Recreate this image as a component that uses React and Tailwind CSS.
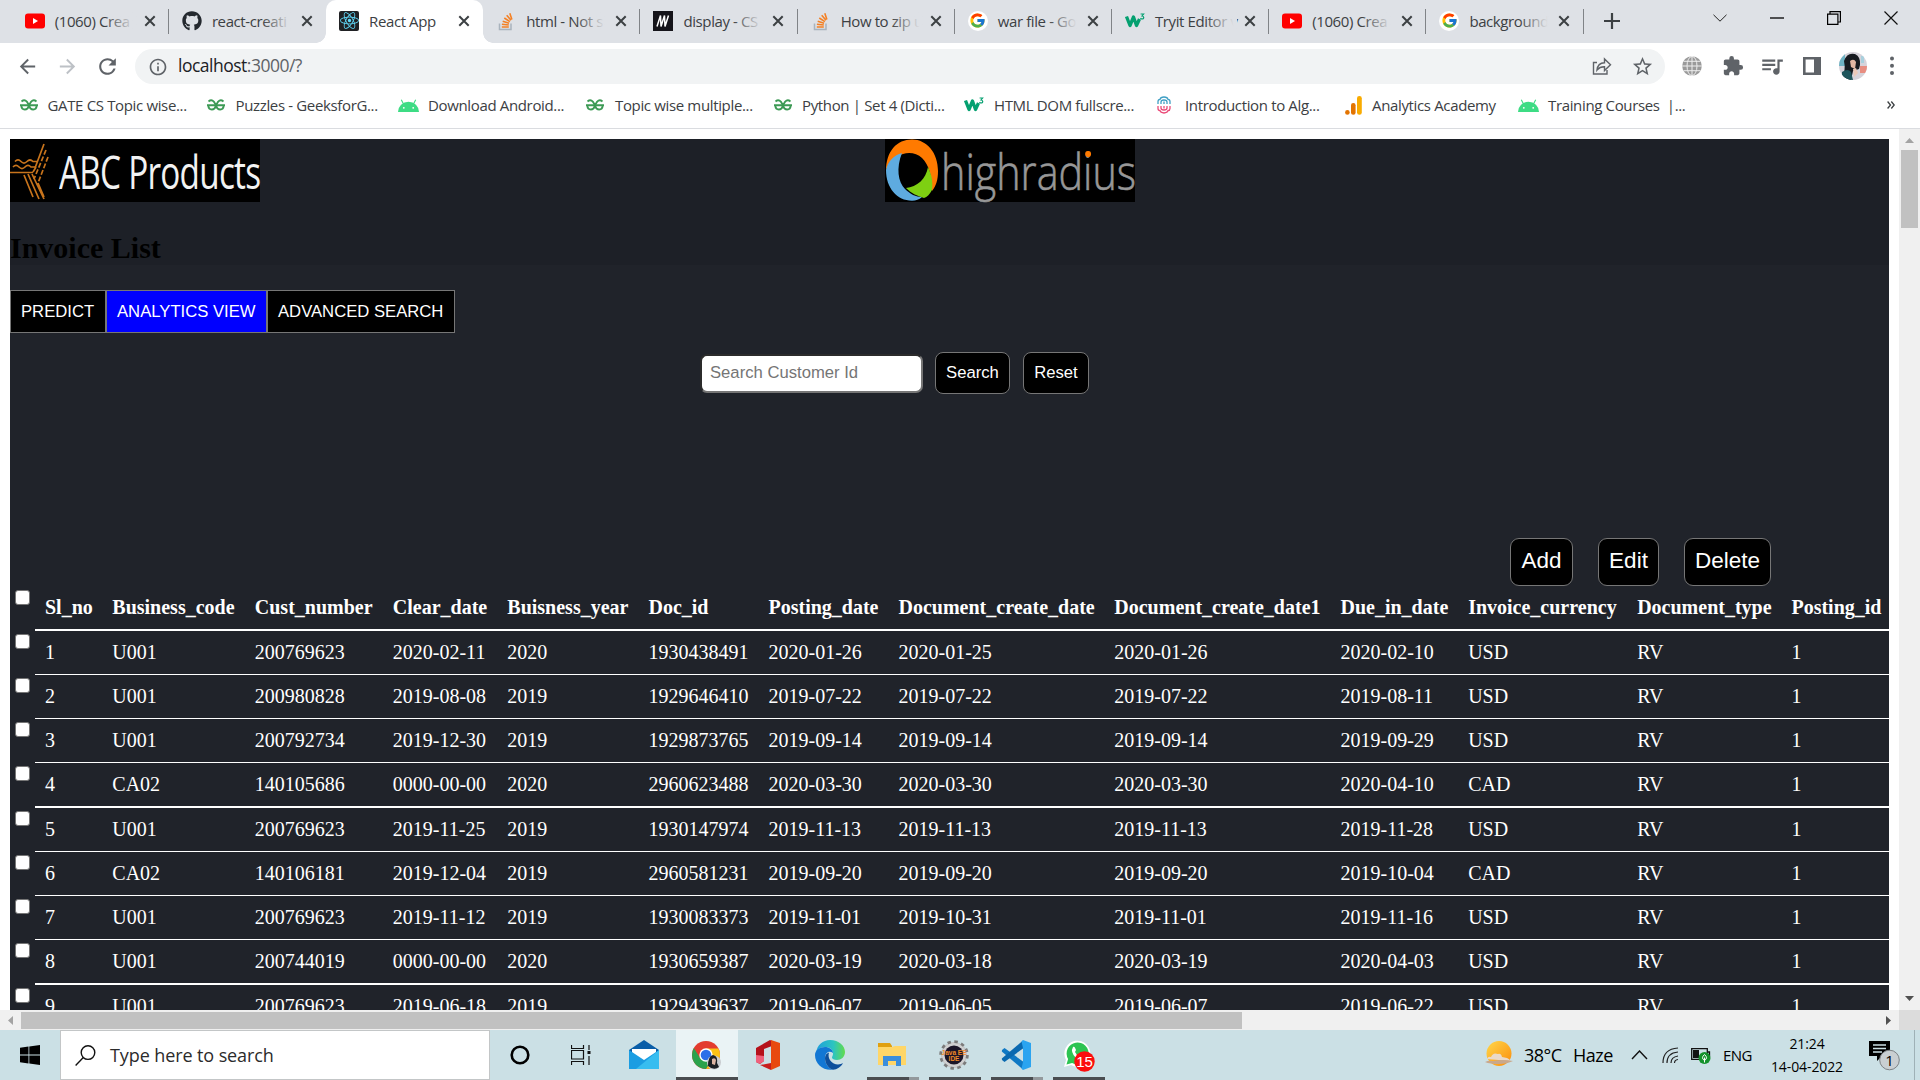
import React from "react";
import { FaGithub, FaReact } from "react-icons/fa";
import { FcGoogle } from "react-icons/fc";
import { MdExtension, MdQueueMusic, MdStarOutline, MdRefresh, MdArrowBack, MdArrowForward, MdInfoOutline } from "react-icons/md";

const YouTube = () => (
  <svg width="20" height="16" viewBox="0 0 20 16"><rect width="20" height="15" y=".5" rx="3" fill="#f00" /><path d="M8 5v6l5-3z" fill="#fff" /></svg>
);
const Github = () => <FaGithub size={20} color="#24292f" />;
const ReactIcon = () => (
  <span className="flex h-5 w-5 items-center justify-center rounded-[2px] bg-[#202124]"><FaReact size={19} color="#61dafb" /></span>
);
const Stack = () => (
  <svg width="20" height="20" viewBox="0 0 20 20" fill="none">
    <path d="M3.500 12.500v6h11.500v-6" stroke="#a9b3bd" strokeWidth="1.500" />
    <path d="M5.800 16h7M5.900 13.200l6.900.8M6.700 10.200l6.400 2M8.300 7l5.600 3.700M10.700 4.200l4.300 5M13.800 2.200l2.100 6.300" stroke="#f48024" strokeWidth="1.600" />
  </svg>
);
const Mdn = () => (
  <svg width="20" height="20" viewBox="0 0 20 20"><rect width="20" height="20" fill="#15141a" /><path d="M4 15.500L7.500 4.500l.5 11L11.500 4.500l.5 11L15.500 4.500" fill="none" stroke="#fff" strokeWidth="1.500" /></svg>
);
const Google = () => <span className="flex h-5 w-5 items-center justify-center rounded-full bg-white"><FcGoogle size={17} /></span>;
const W3 = () => (
  <svg width="20" height="18" viewBox="0 0 20 18" fill="none" stroke="#04a070">
    <path d="M1.500 4.500l3.500 9L8.500 5l3 8.500L14.500 7" strokeWidth="3.300" strokeLinejoin="round" />
    <path d="M15.600 2h3l-1.600 2c2.400.2 2.200 3 .2 3-.9 0-1.400-.4-1.700-.9" strokeWidth="1.200" />
  </svg>
);
const Gfg = () => (
  <svg width="18" height="12" viewBox="0 0 18 12" fill="none" stroke="#3d9a55" strokeWidth="1.900">
    <path d="M1.500 2.400Q4.500 .2 6.800 2.600L9 6.200 11.200 2.600Q13.500 .2 16.500 2.400" />
    <path d="M0 6.200h18M1.300 6.500q.3 4 3.500 4 3.200 0 4.200-4.300M16.700 6.500q-.3 4-3.500 4-3.200 0-4.200-4.300" />
  </svg>
);
const Android = () => (
  <svg width="21" height="15" viewBox="0 0 21 15">
    <path d="M0 14a10.500 10.200 0 0 1 21 0z" fill="#3ddc84" />
    <path d="M5.500 6L3.300 1.700M15.500 6l2.200-4.300" stroke="#3ddc84" strokeWidth="1.100" />
    <circle cx="5.800" cy="9.800" r=".9" fill="#fff" /><circle cx="15.200" cy="9.800" r=".9" fill="#fff" />
  </svg>
);
const Algo = () => (
  <svg width="14" height="18" viewBox="0 0 14 18" fill="none" strokeWidth="1.300">
    <path d="M1 8V5.500Q1 3.500 3 3.300Q3.600 1 7 1t4 2.300Q13 3.500 13 5.500V8M4 8V6q0-2 3-2t3 2v2M7 5.500V8" stroke="#3f9fc4" />
    <path d="M1 10v2.500Q1 14.500 3 14.700Q3.600 17 7 17t4-2.300Q13 14.500 13 12.500V10M4 10v2q0 2 3 2t3-2v-2M7 12.500V10" stroke="#ea4a78" />
  </svg>
);
const Analytics = () => (
  <svg width="17" height="19" viewBox="0 0 17 19"><circle cx="2.400" cy="16.400" r="2.300" fill="#e37400" /><rect x="6" y="7" width="4.600" height="11.700" rx="2.200" fill="#e37400" /><rect x="12" y="0" width="4.800" height="18.700" rx="2.300" fill="#f9ab00" /></svg>
);

const tabs = [
  { icon: YouTube, title: "(1060) Crea" },
  { icon: Github, title: "react-creati" },
  { icon: ReactIcon, title: "React App", active: true },
  { icon: Stack, title: "html - Not s" },
  { icon: Mdn, title: "display - CS" },
  { icon: Stack, title: "How to zip u" },
  { icon: Google, title: "war file - Go" },
  { icon: W3, title: "Tryit Editor v" },
  { icon: YouTube, title: "(1060) Crea" },
  { icon: Google, title: "background" },
];

function Tab({ icon: Icon, title, active, divider }) {
  return (
    <div className={"relative flex h-[43px] w-[157.2px] shrink-0 items-center pl-[13px] pb-[2px] " + (active ? "rounded-t-[10px] bg-white" : "")}>
      {active && (
        <>
          <span className="absolute bottom-0 -left-[10px] h-[10px] w-[10px] bg-[radial-gradient(circle_at_0_0,transparent_9.5px,#fff_10px)]" />
          <span className="absolute bottom-0 -right-[10px] h-[10px] w-[10px] bg-[radial-gradient(circle_at_100%_0,transparent_9.5px,#fff_10px)]" />
        </>
      )}
      <span className="flex h-5 w-5 shrink-0 items-center justify-center"><Icon /></span>
      <span className="relative ml-[10px] w-[82px] whitespace-nowrap text-[15px] leading-[20px] tracking-[-0.4px] text-[#3c4043]">
        {title}
        {!active && <span className="absolute inset-y-0 right-0 w-8 bg-gradient-to-r from-[#dee1e6]/0 to-[#dee1e6] to-90%" />}
      </span>
      <svg className="ml-[7px] shrink-0" width="12" height="12" viewBox="0 0 12 12"><path d="M1.300 1.300l9.400 9.400M10.700 1.300L1.300 10.700" stroke="#3c4043" strokeWidth="2" /></svg>
      {divider && <span className="absolute right-0 top-[9px] h-[25px] w-px bg-[#808387]" />}
    </div>
  );
}

const bookmarks = [
  ["w-[187.500px]", "w-[28px]", Gfg, "GATE CS Topic wise..."],
  ["w-[191px]", "w-[28.500px]", Gfg, "Puzzles - GeeksforG..."],
  ["w-[188px]", "w-[30px]", Android, "Download Android..."],
  ["w-[188px]", "w-[29px]", Gfg, "Topic wise multiple..."],
  ["w-[190px]", "w-[28px]", Gfg, "Python | Set 4 (Dicti..."],
  ["w-[193px]", "w-[30px]", W3, "HTML DOM fullscre..."],
  ["w-[188px]", "w-[28px]", Algo, "Introduction to Alg..."],
  ["w-[173px]", "w-[27px]", Analytics, "Analytics Academy"],
  ["w-[170px]", "w-[30px]", Android, "Training Courses  |..."],
];

function Browser() {
  return (
    <header className="h-[129px] shrink-0 border-b border-[#dadce0] bg-white">
      <div className="flex h-[43px] bg-[#dee1e6] pl-[11.700px]">
        {tabs.map((t, i) => <Tab key={i} {...t} divider={i !== 1 && i !== 2} />)}
        <svg className="ml-[20px] mt-[13px]" width="16" height="16" viewBox="0 0 16 16"><path d="M8 0v16M0 8h16" stroke="#3c4043" strokeWidth="2.200" /></svg>
        <div className="ml-auto mr-[22px] mt-[11px] flex h-[14px] items-center gap-[43px]">
          <svg width="14" height="8" viewBox="0 0 14 8"><path d="M.5.800L7 7.200 13.500.800" fill="none" stroke="#222" /></svg>
          <svg width="14" height="2" viewBox="0 0 14 2"><path d="M0 1h14" stroke="#000" strokeWidth="1.300" /></svg>
          <svg width="14" height="14" viewBox="0 0 14 14"><path d="M.6 3.100h10.300v10.300H.6zM3 3V.6h10.400V11H11" fill="none" stroke="#000" strokeWidth="1.200" /></svg>
          <svg width="14" height="14" viewBox="0 0 14 14"><path d="M.5.500l13 13M13.500.500l-13 13" stroke="#111" strokeWidth="1.200" /></svg>
        </div>
      </div>
      <div className="flex h-[44px] items-center pt-[2px]">
        <MdArrowBack className="ml-[16px]" size={23} color="#5f6368" />
        <MdArrowForward className="ml-[17px]" size={23} color="#bdc1c6" />
        <MdRefresh className="ml-[16px]" size={25} color="#5f6368" />
        <div className="ml-[15px] mt-px flex h-[35px] w-[1530px] items-center rounded-full bg-[#f1f3f4] pl-[13px] pr-[11px]">
          <MdInfoOutline size={20} color="#5f6368" />
          <span className="ml-[10px] mb-px text-[17.500px] leading-none tracking-[-0.5px] text-[#202124]">localhost<span className="text-[#5f6368]">:3000/?</span></span>
          <svg className="ml-auto" width="20" height="19" viewBox="0 0 20 19" fill="none" stroke="#5f6368" strokeWidth="1.400">
            <path d="M5 5.500H1.500V17H15v-4" /><path d="M5 13c.5-4.500 3-7 7.500-7.200V2l6 5.800-6 5.700V9.800C9 9.700 7 10.700 5 13z" />
          </svg>
          <MdStarOutline className="ml-[19px]" size={23} color="#5f6368" />
        </div>
        <svg className="ml-[17px]" width="20" height="20" viewBox="0 0 20 20">
          <circle cx="10" cy="10" r="9.800" fill="#9a9a9a" />
          <path d="M10 0v20M0 10h20M1.500 5.300h17M1.500 14.700h17" stroke="#eee" />
          <ellipse cx="10" cy="10" rx="5" ry="9.600" fill="none" stroke="#eee" />
        </svg>
        <MdExtension className="ml-[20px]" size={22} color="#5f6368" />
        <MdQueueMusic className="ml-[15px]" size={26} color="#5f6368" />
        <svg className="ml-[18px]" width="18" height="18" viewBox="0 0 18 18"><path d="M1.300 1.300h15.400v15.400H1.300z" fill="#fff" stroke="#5f6368" strokeWidth="2.600" /><path d="M11 1h6v16h-6z" fill="#5f6368" /></svg>
        <svg className="ml-[18px]" width="28" height="28" viewBox="0 0 28 28">
          <defs><clipPath id="avatar"><circle cx="14" cy="14" r="14" /></clipPath></defs>
          <g clipPath="url(#avatar)">
            <path d="M0 0h28v28H0z" fill="#d6d3da" /><path d="M0 0h6v14H0z" fill="#6fb3c4" /><path d="M21 14h7v7h-7z" fill="#e88d80" /><path d="M22 4h3v7h-3z" fill="#a9d0dd" />
            <path d="M5 9Q8 0 16 2q6 3 5 11l-1 4-6 2-2 9H3q4-10 2-19z" fill="#171b20" />
            <path d="M11 9q4-3 6 1l-1 7-4-2z" fill="#e2b7a3" /><path d="M3 20q6-4 9 0l2 8H3z" fill="#1e555c" /><path d="M14 17l3-1 2 5-4 4z" fill="#ebc9b8" />
          </g>
        </svg>
        <svg className="ml-[23px]" width="4" height="20" viewBox="0 0 4 20" fill="#5f6368"><circle cx="2" cy="2.500" r="2" /><circle cx="2" cy="9.800" r="2" /><circle cx="2" cy="17" r="2" /></svg>
      </div>
      <div className="flex h-[38px] items-center pl-[19.500px] pb-[2px] text-[15px] tracking-[-0.35px] text-[#3c4043]">
        {bookmarks.map(([w, iw, Icon, label]) => (
          <div key={label} className={"flex shrink-0 items-center whitespace-pre " + w}>
            <span className={"flex shrink-0 items-center " + iw}><Icon /></span>{label}
          </div>
        ))}
        <svg className="ml-auto mr-[25px]" width="8" height="8" viewBox="0 0 8 8"><path d="M.6.500L3.500 4 .6 7.500M4.300.500L7.200 4 4.300 7.500" fill="none" stroke="#3c4043" strokeWidth="1.300" /></svg>
      </div>
    </header>
  );
}

function AbcLogo() {
  return (
    <div className="flex h-[63px] w-[250px] items-center bg-black">
      <svg className="shrink-0" width="40" height="63" viewBox="0 0 40 63" fill="none" stroke="#c8741c" strokeWidth="1.700">
        <path d="M34 5L25 29M0 33.500h23M23 33l3-5" />
        <path d="M5 22.500q3-3 6 0t6 0 6 0h4M3 28q3-3 6 0t6 0 6 0h4" />
        <path d="M36 11L24 40M38 18l-10 26" strokeDasharray="5 2" />
        <path d="M14 36l9 22M18 35l11 25M22 35l12 25M28 44l6 14" />
      </svg>
      <span className="mt-[3px] ml-[9px] inline-block w-[201px] origin-left scale-x-[0.757] scale-y-[1.020] whitespace-nowrap font-['Open_Sans'] text-[44px] leading-[60px] tracking-[-1px] text-[#f2f2f2]">ABC Products</span>
    </div>
  );
}

function HighradiusLogo() {
  return (
    <div className="flex h-[63px] w-[250px] bg-black">
      <svg className="shrink-0" width="54" height="63" viewBox="0 0 54 63">
        <path d="M1 32C1 12 12 .5 27 .5S53 14 53 32c0 9-2 15-6 20 0-15-3-26-10-33-5-5-13-6-19-4C9 17 3 23 1 32z" fill="#ff7a00" />
        <path d="M1 31c2-9 8-15 16-17-6 15-4 29 3 36 5 5 11 8 17 8-3 2.500-6 3.700-10 3.700C12 61.700 1 49 1 31z" fill="#5eabe0" />
        <path d="M43 28c4 9 5 15 4 23-2 4-5 7-8 8-7-2-13-5-18-10 11-1 20-9 22-21z" fill="#7ed012" />
      </svg>
      <span className="mt-[3px] ml-[2px] inline-block w-[194px] origin-left scale-x-[0.843] whitespace-nowrap font-['Open_Sans'] text-[49px] font-light leading-[58px] text-[#979797] [-webkit-text-stroke:0.6px_#979797]">highrad<span className="relative">i<span className="absolute left-[2px] top-[13px] h-[6px] w-[7px] rounded-full bg-[#ff7a00]" /></span>us</span>
    </div>
  );
}

const columns = ["Sl_no", "Business_code", "Cust_number", "Clear_date", "Buisness_year", "Doc_id", "Posting_date", "Document_create_date", "Document_create_date1", "Due_in_date", "Invoice_currency", "Document_type", "Posting_id"];
const rows = [
  ["1", "U001", "200769623", "2020-02-11", "2020", "1930438491", "2020-01-26", "2020-01-25", "2020-01-26", "2020-02-10", "USD", "RV", "1"],
  ["2", "U001", "200980828", "2019-08-08", "2019", "1929646410", "2019-07-22", "2019-07-22", "2019-07-22", "2019-08-11", "USD", "RV", "1"],
  ["3", "U001", "200792734", "2019-12-30", "2019", "1929873765", "2019-09-14", "2019-09-14", "2019-09-14", "2019-09-29", "USD", "RV", "1"],
  ["4", "CA02", "140105686", "0000-00-00", "2020", "2960623488", "2020-03-30", "2020-03-30", "2020-03-30", "2020-04-10", "CAD", "RV", "1"],
  ["5", "U001", "200769623", "2019-11-25", "2019", "1930147974", "2019-11-13", "2019-11-13", "2019-11-13", "2019-11-28", "USD", "RV", "1"],
  ["6", "CA02", "140106181", "2019-12-04", "2019", "2960581231", "2019-09-20", "2019-09-20", "2019-09-20", "2019-10-04", "CAD", "RV", "1"],
  ["7", "U001", "200769623", "2019-11-12", "2019", "1930083373", "2019-11-01", "2019-10-31", "2019-11-01", "2019-11-16", "USD", "RV", "1"],
  ["8", "U001", "200744019", "0000-00-00", "2020", "1930659387", "2020-03-19", "2020-03-18", "2020-03-19", "2020-04-03", "USD", "RV", "1"],
  ["9", "U001", "200769623", "2019-06-18", "2019", "1929439637", "2019-06-07", "2019-06-05", "2019-06-07", "2019-06-22", "USD", "RV", "1"],
];

function Row({ cells, header, thick }) {
  return (
    <div className="flex pl-[5px]">
      <span className="mt-[3px] mr-[5px] h-[15px] w-[15px] shrink-0 rounded-[3px] border border-[#767676] bg-white" />
      <div className={"grid flex-1 grid-cols-[67.300px_142.500px_138px_114.500px_141.200px_120px_130px_215.800px_226.200px_127.700px_169px_154.300px_108px] whitespace-nowrap border-white text-[20px] leading-[23px] text-white " + (header ? "h-[44px] border-b-2 pt-[9px] font-bold" : thick ? "h-[45px] border-b-2 pt-[10px]" : "h-[44px] border-b pt-[10px]")}>
        {cells.map((c, i) => <span key={i} className="pl-[10px]">{c}</span>)}
      </div>
    </div>
  );
}

function Btn({ children, className, color = "bg-black" }) {
  return <button className={"shrink-0 border border-[#767676] text-white " + color + " " + className}>{children}</button>;
}

function Page() {
  return (
    <main className="h-[881px] w-[1899px] overflow-hidden bg-white pt-[10px] pl-[10px] pr-[10px] font-['Liberation_Serif',serif]">
      <div className="h-[871px] w-[1879px] overflow-hidden bg-[#20232a]">
        <div className="h-[126px] bg-[#1d2027]">
          <div className="flex"><AbcLogo /><div className="ml-[625px]"><HighradiusLogo /></div></div>
          <h2 className="mt-[29px] text-[30px] leading-[34px] font-bold text-black">Invoice List</h2>
        </div>
        <div className="mt-[25px] flex font-['Liberation_Sans',sans-serif] text-[16.670px] leading-[19px]">
          <Btn className="h-[43px] w-[96px] pl-[10px] text-left">PREDICT</Btn>
          <Btn color="bg-[#0000ff]" className="h-[43px] w-[161px] whitespace-nowrap pl-[10px] text-left">ANALYTICS VIEW</Btn>
          <Btn className="h-[43px] w-[188px] whitespace-nowrap pl-[10px] text-left">ADVANCED SEARCH</Btn>
        </div>
        <div className="mt-[19px] flex items-start pl-[690px] font-['Liberation_Sans',sans-serif] text-[16.670px] leading-[19px]">
          <input className="mt-[2px] h-[39px] w-[223px] rounded-[7px] border-2 border-t-[#2b2b2b] border-l-[#2b2b2b] border-r-[#767676] border-b-[#767676] bg-white pl-[8px] pb-[2px] placeholder:text-[#757575]" placeholder="Search Customer Id" />
          <Btn className="ml-[12px] h-[42px] w-[75px] rounded-[8px] pb-px">Search</Btn>
          <Btn className="ml-[13px] h-[42px] w-[66px] rounded-[8px] pb-px">Reset</Btn>
        </div>
        <div className="mt-[144px] flex pl-[1500px] font-['Liberation_Sans',sans-serif] text-[22.500px] leading-[26px]">
          <Btn className="h-[48px] w-[63px] rounded-[9px] pb-[2px]">Add</Btn>
          <Btn className="ml-[25px] h-[48px] w-[61px] rounded-[9px] pb-[2px]">Edit</Btn>
          <Btn className="ml-[25px] h-[48px] w-[87px] rounded-[9px] pb-[2px]">Delete</Btn>
        </div>
        <div className="mt-px">
          <Row cells={columns} header />
          {rows.map((r, i) => <Row key={i} cells={r} thick={i % 4 === 3} />)}
        </div>
      </div>
    </main>
  );
}

const Mail = () => (
  <svg width="30" height="30" viewBox="0 0 30 30"><path d="M0 10L15 0l15 10v3H0z" fill="#0a5ea8" /><path d="M3 9h24v12H3z" fill="#fff" /><path d="M0 10l15 10L30 10v19H0z" fill="#1b9de2" /><path d="M30 10L7 29h23z" fill="#37bdf0" /></svg>
);
const Chrome = () => (
  <svg width="30" height="30" viewBox="0 0 30 30">
    <circle cx="15" cy="15" r="14" fill="#e33b2e" />
    <path d="M15 8.500h12.400A14 14 0 0 1 15 29l6-10.500z" fill="#fbc116" />
    <path d="M15 29A14 14 0 0 1 2.880 8L9.200 18.200 21 18.500z" fill="#2ba24c" />
    <circle cx="15" cy="15" r="6.700" fill="#fff" /><circle cx="15" cy="15" r="5.300" fill="#2a6fe8" />
    <circle cx="23" cy="22.500" r="7" fill="#c9ccd0" /><path d="M17 26q0-10 5-11 5 1 4 8l2 4q-5 4-11-1z" fill="#1b1f24" /><path d="M21 19q3-2 4 1l-1 5-3-1z" fill="#dcb4a2" />
  </svg>
);
const Office = () => (
  <svg width="26" height="30" viewBox="0 0 26 30"><path d="M1 8L15 0l2 1v5l-8 3v12l-4 3-4-2z" fill="#b5121b" /><path d="M16 0l9 3v23l-9 4z" fill="#e8490f" /><path d="M1 15v7l4 2 4-3v-5z" fill="#f0617c" /><path d="M5 25l11-2v7z" fill="#c81e1e" /></svg>
);
const Edge = () => (
  <svg width="30" height="30" viewBox="0 0 30 30">
    <defs><linearGradient id="edge"><stop offset="0" stopColor="#1f9fdc" /><stop offset=".6" stopColor="#2cc4c0" /><stop offset="1" stopColor="#63dc4c" /></linearGradient></defs>
    <path d="M1 13C2 5 8 0 15 0c9 0 15 6 15 12 0 5-4 8-8 8-3 0-5-1-5-2.500 0-1 1-1.500 1-4C18 9 14 7 10 7c-5 0-8 3-9 6z" fill="url(#edge)" />
    <path d="M0 15c0-5 5-8 10-8 4 0 8 2.500 8 6-4-3-8 0-8 5 0 6 4 11 8 11.700C8 31 0 24 0 15z" fill="#1277d4" /><path d="M10 18c0-3 2-5 4-5.500-2 6 3 12 9 12 2 0 4-1 5-1.500-2 4-6 6.500-10 6.700-4-.7-8-5.700-8-11.700z" fill="#0d4f9c" />
  </svg>
);
const Explorer = () => (
  <svg width="28" height="24" viewBox="0 0 28 24"><path d="M0 0h12l2 3v4H0z" fill="#e0a010" /><path d="M0 4h14l3-1h11v19H0z" fill="#ffd667" /><path d="M5 13h18v10h-5v-5h-8v5H5z" fill="#3b8edb" /></svg>
);
const Java = () => (
  <svg width="30" height="30" viewBox="0 0 30 30">
    <circle cx="15" cy="15" r="13" fill="#c4c4c4" stroke="#7c7c7c" strokeWidth="3.500" strokeDasharray="3.400 3.400" /><circle cx="15" cy="15" r="12" fill="#d0d0d0" /><circle cx="15" cy="15" r="9.500" fill="#1b1527" />
    <text x="15" y="14.500" textAnchor="middle" fontFamily="Liberation Sans" fontWeight="bold" fontSize="6.500" fill="#f08a28">Java EE</text><text x="15" y="21" textAnchor="middle" fontFamily="Liberation Sans" fontWeight="bold" fontSize="6.500" fill="#f08a28">IDE</text>
  </svg>
);
const VsCode = () => (
  <svg width="30" height="30" viewBox="0 0 30 30"><path d="M1 10l2.500-2L22 21.500v8L.8 11.500z" fill="#1079c4" /><path d="M1 20l2.500 2L22 8.500v-8L.8 18.500z" fill="#0a69b0" /><path d="M22 0l8 3v24l-8 3-1.500-1.500L22 22V8l-1.500-6.500z" fill="#2ba4f0" /></svg>
);
const WhatsApp = () => (
  <svg width="34" height="34" viewBox="0 0 34 34">
    <path d="M3 29l2-7a13 13 0 1 1 5 5z" fill="#fff" /><path d="M5.500 26.500l1.600-5.500a11 11 0 1 1 4 4z" fill="#2dc452" />
    <path d="M12 9c1-1 2 0 3 3l-1 2q2 4 5 5l2-1q3 2 2 3-3 3-8-1-6-6-3-11z" fill="#fff" />
    <circle cx="23.500" cy="23.500" r="10.200" fill="#fb0d0d" /><text x="23.500" y="29" textAnchor="middle" fontFamily="Liberation Sans" fontSize="15" fill="#fff">15</text>
  </svg>
);
const Cortana = () => <svg width="20" height="20" viewBox="0 0 20 20"><circle cx="10" cy="10" r="8.300" fill="none" stroke="#000" strokeWidth="2.600" /></svg>;
const TaskView = () => (
  <svg width="22" height="20" viewBox="0 0 22 20" fill="none" stroke="#111" strokeWidth="1.200"><path d="M.5 0v3.500h12V0M.5 5.500h12v8.500h-12zM.5 20v-3.500h12V20M18 0v5M18 11v9" /><path d="M16.500 6h3v3h-3z" fill="#111" stroke="none" /></svg>
);

const apps = [
  [Cortana], [TaskView], [Mail], [Chrome, "active"], [Office], [Edge], [Explorer, "multi"], [Java, "open"], [VsCode, "multi"], [WhatsApp, "open"],
];

function Taskbar() {
  return (
    <footer className="flex h-[50px] items-center bg-[#cbe0e5] text-black">
      <svg className="ml-[20px]" width="20" height="20" viewBox="0 0 20 20"><path d="M0 2.800L8.500 1.600v8H0zM9.300 1.400L20 0v9.600H9.300zM0 10.400h8.500v8L0 17.200zM9.300 10.400H20V20L9.300 18.600z" /></svg>
      <div className="ml-[20px] flex h-[50px] w-[430px] items-center border border-[#c3c6c7] bg-white pl-[14px]">
        <svg width="21" height="21" viewBox="0 0 21 21" fill="none" stroke="#111" strokeWidth="1.400"><circle cx="13" cy="7.600" r="6.800" /><path d="M8.300 12.600L.6 20.400" /></svg>
        <span className="ml-[14px] text-[18px] tracking-[-0.1px] text-[#2b2b2b]">Type here to search</span>
      </div>
      {apps.map(([Icon, state], i) => (
        <div key={i} className={"relative flex h-[50px] w-[62px] items-center justify-center pr-[2px] " + (state === "active" ? "bg-[#eaf3f5]" : "")}>
          <Icon />
          {state === "active" && <span className="absolute inset-x-0 bottom-0 h-[3px] bg-[#4a4d50]" />}
          {state === "open" && <span className="absolute inset-x-[5px] bottom-0 h-[3px] bg-[#4a4d50]" />}
          {state === "multi" && <span className="absolute inset-x-[5px] bottom-0 flex h-[3px]"><i className="w-[42px] bg-[#4a4d50]" /><i className="flex-1 bg-[#93999c]" /></span>}
        </div>
      ))}
      <svg className="ml-auto" width="28" height="28" viewBox="0 0 28 28">
        <defs><linearGradient id="sun" x2="1" y2="1"><stop stopColor="#ffd84a" /><stop offset="1" stopColor="#fb8c0c" /></linearGradient></defs>
        <circle cx="14" cy="12.500" r="12.500" fill="url(#sun)" /><path d="M2 18q1-3 4-2 2-5 7-3 3-1 4 3l5 1q3 1 3 3z" fill="#ead9c8" /><path d="M0 21q4-2 8-1 10-2 20 0-6 3-14 3-9 0-14-2z" fill="#c9a88c" />
      </svg>
      <span className="ml-[11px] w-[49px] whitespace-nowrap text-[18px] tracking-[-0.5px]">38°C</span>
      <span className="w-[58px] text-[18px] tracking-[-0.5px]">Haze</span>
      <svg width="17" height="10" viewBox="0 0 17 10"><path d="M1 9l7.500-8L16 9" fill="none" stroke="#111" strokeWidth="1.400" /></svg>
      <svg className="ml-[14px]" width="17" height="17" viewBox="0 0 17 17" fill="none" stroke="#222" strokeWidth="1.200"><path d="M1 16Q1 2 16 1M5 16Q5 6 16 5M9 16q0-6 7-7M12.500 16q0-3 3.500-3.500" /></svg>
      <svg className="ml-[12px]" width="20" height="18" viewBox="0 0 20 18"><path d="M.7 2.700h15.600v10.600H.7zM17 6h1.500v4H17" fill="none" stroke="#111" strokeWidth="1.300" /><path d="M2 4h6v8H2z" fill="#111" /><circle cx="13.500" cy="12" r="6" fill="#15922c" /><path d="M13.500 8.500q-4 3.500 0 6 4-2.500 0-6zm0 3v5" fill="none" stroke="#fff" /></svg>
      <span className="ml-[12px] w-[31px] text-[15px] tracking-[-0.6px]">ENG</span>
      <div className="ml-[13px] w-[80px] text-center text-[14px] leading-[23px] tracking-[-0.1px]"><div>21:24</div><div>14-04-2022</div></div>
      <svg className="ml-[22px]" width="32" height="32" viewBox="0 0 32 32">
        <path d="M0 2h21v15h-8l-5 5v-5H0z" /><path d="M4 6h13M4 9.500h13M4 13h9" stroke="#cbe0e5" strokeWidth="1.300" />
        <circle cx="20.500" cy="21" r="9.800" fill="#c9cfd2" stroke="#7d8285" /><text x="20.500" y="26.500" textAnchor="middle" fontFamily="Open Sans" fontSize="15">1</text>
      </svg>
      <span className="ml-[13px] mr-[5px] h-[50px] w-px shrink-0 bg-[#9fb1b6]" />
    </footer>
  );
}

export default function App() {
  return (
    <div className="flex h-[1080px] w-[1920px] flex-col overflow-hidden bg-white font-['Open_Sans','Noto_Sans',sans-serif]">
      <Browser />
      <div className="flex h-[881px]">
        <Page />
        <div className="flex w-[21px] flex-col items-center bg-[#f0f0f0]">
          <svg className="mt-[9px]" width="9" height="5" viewBox="0 0 9 5"><path d="M0 5l4.500-5L9 5z" fill="#a3a3a3" /></svg>
          <span className="mt-[7px] h-[78px] w-[17px] bg-[#c1c1c1]" />
          <svg className="mt-auto mb-[9px]" width="9" height="5" viewBox="0 0 9 5"><path d="M0 0l4.500 5L9 0z" fill="#505050" /></svg>
        </div>
      </div>
      <div className="flex h-[20px]">
        <div className="flex w-[1899px] items-center bg-[#f0f0f0]">
          <svg className="ml-[8px]" width="5" height="9" viewBox="0 0 5 9"><path d="M5 0L0 4.500 5 9z" fill="#a3a3a3" /></svg>
          <span className="ml-[8px] h-[17px] w-[1221px] bg-[#c1c1c1]" />
          <svg className="ml-auto mr-[8px]" width="5" height="9" viewBox="0 0 5 9"><path d="M0 0l5 4.500L0 9z" fill="#505050" /></svg>
        </div>
        <div className="w-[21px] bg-[#dcdcdc]" />
      </div>
      <Taskbar />
    </div>
  );
}
